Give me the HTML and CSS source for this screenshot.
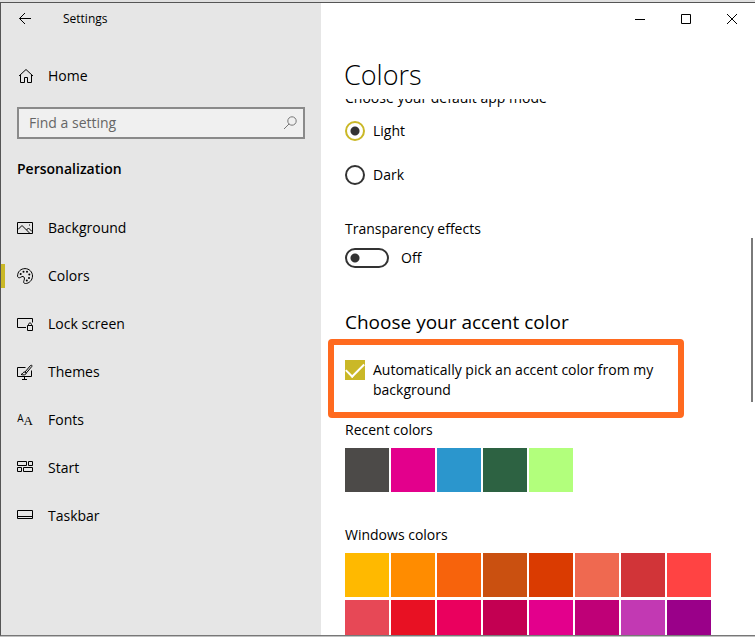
FILE: index.html
```html
<!DOCTYPE html>
<html lang="en">
<head>
	<meta charset="UTF-8">
	<meta name="viewport" content="width=device-width, initial-scale=1.0">
	<title>Settings</title>
	<link rel="stylesheet" href="styles.css">
</head>
<body>
	<div class="window">
		<aside class="sidebar">
			<div class="titlebar">
				<button class="back" aria-label="Back">
					<svg width="16" height="16" viewBox="0 0 16 16"><path d="M14 7.500H2.500M8 2L2.500 7.500L8 13"/></svg>
				</button>
				<span class="app-name">Settings</span>
			</div>

			<a class="item home" href="#">
				<svg width="16" height="16" viewBox="0 0 16 16"><path d="M2 8L9 1.500L16 8M3.500 7V14.500H7.500V9.500H10.500V14.500H14.500V7"/></svg>
				Home
			</a>

			<div class="search">
				<input type="text" placeholder="Find a setting" aria-label="Find a setting">
				<svg width="14" height="14" viewBox="0 0 14 14"><circle cx="9" cy="5" r="4.200"/><path d="M6 8L1 13"/></svg>
			</div>

			<h3>Personalization</h3>

			<nav>
				<a class="item" href="#">
					<svg width="16" height="16" viewBox="0 0 16 16"><path d="M.5 2.500H15.500V13.500H.5ZM1 9.500L5 5.500L12.500 13M9.500 10L11.500 8L15 11.500M12 5H13"/></svg>
					Background
				</a>
				<a class="item active" href="#">
					<svg width="16" height="16" viewBox="0 0 16 16"><path d="M.6 8.500C.3 3.500 4 .6 8 .6C12.300 .6 15.500 4 15.500 8C15.500 12.300 12 15.500 8.500 15.500C6.500 15.500 6.300 14 7 12.500C7.900 10.500 7.500 8.800 6 8.500C4.500 8.200 3.700 9.700 2.500 9.700C1.500 9.700 .7 9.300 .6 8.500Z"/><g class="dots"><circle cx="3.700" cy="6" r="1"/><circle cx="6.500" cy="3.800" r="1"/><circle cx="10" cy="3.800" r="1"/><circle cx="12.300" cy="6.500" r="1"/><circle cx="12" cy="10" r="1"/><circle cx="9.800" cy="12.500" r="1"/></g></svg>
					Colors
				</a>
				<a class="item" href="#">
					<svg width="16" height="16" viewBox="0 0 16 16"><path d="M9 11.500H.5V2.500H15.500V6.500M10.500 9.500H15.500V14.500H10.500ZM11.500 9.500V8.500C11.500 6.500 14.500 6.500 14.500 8.500V9.500"/></svg>
					Lock screen
				</a>
				<a class="item" href="#">
					<svg width="16" height="16" viewBox="0 0 16 16"><path d="M8.500 3.500H.5V12.500H14.500V6.500M7.500 12.500V15M5 15.500H10M8 8L13.500 1.500C14.500 .8 15.500 1.500 14.800 2.500L9.300 9M8 8C6 7.600 6 10 4 10.500C6.500 11.300 9 11 9.300 9Z"/></svg>
					Themes
				</a>
				<a class="item" href="#">
					<span class="letters" aria-hidden="true"><span class="sans">A</span><span class="serif">A</span></span>
					Fonts
				</a>
				<a class="item" href="#">
					<svg width="16" height="16" viewBox="0 0 16 16"><path d="M.5 1.500H9.500V5.500H.5ZM11.500 1.500H15.500V5.500H11.500ZM.5 7.500H4.500V11.500H.5ZM6.500 7.500H15.500V11.500H6.500Z"/></svg>
					Start
				</a>
				<a class="item" href="#">
					<svg width="16" height="16" viewBox="0 0 16 16"><path d="M.5 2.500H15.500V10.500H.5ZM.5 8.500H15.500"/></svg>
					Taskbar
				</a>
			</nav>
		</aside>

		<main class="page">
			<div class="caption">
				<button aria-label="Minimize"><svg width="12" height="12" viewBox="0 0 12 12"><path d="M1 6.500H11"/></svg></button>
				<button aria-label="Maximize"><svg width="12" height="12" viewBox="0 0 12 12"><path d="M1.500 1.500H10.500V10.500H1.500Z"/></svg></button>
				<button aria-label="Close"><svg width="12" height="12" viewBox="0 0 12 12"><path d="M1 1L11 11M11 1L1 11"/></svg></button>
			</div>
			<h1>Colors</h1>

			<div class="scroller">
				<div class="content">
					<p>Choose your default app mode</p>
					<div class="modes">
						<label class="option"><input type="radio" name="mode" checked> Light</label>
						<label class="option"><input type="radio" name="mode"> Dark</label>
					</div>

					<label class="effects" for="transparency">Transparency effects</label>
					<div class="switch">
						<input type="checkbox" id="transparency" role="switch">
						<span>Off</span>
					</div>

					<h2>Choose your accent color</h2>
					<div class="highlight">
						<label class="option">
							<input type="checkbox" checked>
							<span>Automatically pick an accent color from my background</span>
						</label>
					</div>

					<p>Recent colors</p>
					<div class="swatches" id="recent"></div>

					<p class="windows-colors">Windows colors</p>
					<div class="swatches" id="windows"></div>
				</div>
			</div>
			<div class="thumb"></div>
		</main>
	</div>

	<script src="script.js"></script>
</body>
</html>
```

FILE: styles.css
```css
:root {
	--accent: #cab827;
	--dark: #333;
}
* {
	box-sizing: border-box;
}
body {
	margin: 0;
	height: 100vh;
	padding: 2px 0 1px;
	background: linear-gradient(#e0e0e0, #c0c0c0);
	color: #000;
	font: 14px/20px "Open Sans", "Noto Sans", sans-serif;
	overflow: hidden;
}
.window {
	display: flex;
	height: 100%;
	border: 1px solid #555;
	border-right: 0;
	border-bottom-color: #777;
}
h1, h2, h3, p {
	margin: 0;
	font-weight: normal;
}
button {
	border: 0;
	padding: 0;
	background: none;
}
svg {
	display: block;
	flex: none;
	fill: none;
	stroke: #000;
}

/* left side */
.sidebar {
	flex: none;
	width: 320px;
	background-color: #e6e6e6;
}
.titlebar {
	display: flex;
	align-items: center;
	gap: 30px;
	height: 32px;
	padding-left: 16px;
}
.app-name {
	font-size: 12px;
}
.item {
	display: flex;
	align-items: center;
	gap: 15px;
	height: 48px;
	padding-left: 16px;
	color: #000;
	text-decoration: none;
}
.home {
	margin-top: 17px;
}
.active {
	background: linear-gradient(var(--accent), var(--accent)) left center / 4px 24px no-repeat;
}
.search {
	display: flex;
	align-items: center;
	height: 32px;
	margin: 7px 16px 20px;
	padding: 0 6px 0 10px;
	border: 2px solid #8a8a8a;
	background-color: #f0f0f0;
}
.search input {
	flex: 1;
	min-width: 0;
	padding: 0;
	border: 0;
	outline: 0;
	background: none;
	font: inherit;
}
.search input::placeholder {
	color: #666;
	opacity: 1;
}
.search svg {
	stroke: #777;
}
h3 {
	margin: 0 16px 25px;
	font-size: 14px;
	font-weight: 600;
}
.dots {
	fill: #000;
	stroke: none;
}
/* small A, then a bigger one a bit lower */
.letters {
	display: flex;
	align-items: flex-end;
	justify-content: center;
	width: 16px;
	height: 16px;
}
.sans {
	padding-bottom: 4px;
	font-size: 10px;
	line-height: 12px;
}
.serif {
	font: 13px/14px "Liberation Serif", serif;
}

/* right side */
.page {
	position: relative;
	display: flex;
	flex: 1;
	flex-direction: column;
	min-width: 0;
	background-color: #fff;
}
.caption {
	display: flex;
	justify-content: flex-end;
	height: 32px;
}
.caption button {
	display: flex;
	align-items: center;
	justify-content: center;
	width: 46px;
}
h1 {
	padding: 22px 23px 6px;
	font-size: 27px;
	font-weight: 300;
	line-height: 36px;
}
.scroller {
	flex: 1;
	min-height: 0;
	overflow: hidden;
}
/* scrolled a little, first line is cut by the header */
.content {
	margin-top: -11px;
	padding: 0 24px;
}
.modes {
	display: flex;
	flex-direction: column;
	gap: 24px;
	margin: 13px 0 34px;
}
.option {
	display: flex;
	gap: 8px;
}
.option input, .switch input {
	appearance: none;
	flex: none;
	width: 20px;
	height: 20px;
	margin: 0;
	border: 2px solid var(--dark);
	border-radius: 10px;
}
.option input[type=radio]:checked {
	border-color: var(--accent);
	background: radial-gradient(circle, var(--dark) 4px, transparent 5px);
}
.option input[type=checkbox] {
	display: grid;
	place-items: center;
	border: 0;
	border-radius: 0;
	background-color: var(--accent);
}
.option input[type=checkbox]:checked::before {
	content: "";
	width: 16px;
	height: 8px;
	margin-bottom: 5px;
	border: solid #fff;
	border-width: 0 0 2px 2px;
	transform: rotate(-45deg);
}
.effects {
	display: block;
	margin-bottom: 9px;
}
.switch {
	display: flex;
	gap: 12px;
}
.switch input {
	width: 44px;
	background: radial-gradient(circle at 8px 8px, var(--dark) 4px, transparent 5px);
}
h2 {
	margin: 40px 0 3px;
	font-size: 19px;
	line-height: 28px;
}
.highlight {
	max-width: 356px;
	margin: 0 0 2px -17px;
	padding: 15px 11px 12px;
	border: 6px solid #ff6a1f;
	border-radius: 4px;
}
.swatches {
	display: grid;
	grid-template-columns: repeat(8, 44px);
	gap: 3px 2px;
	margin-top: 8px;
}
.swatches button {
	height: 44px;
}
.windows-colors {
	margin-top: 33px;
}
/* scroll bar */
.thumb {
	position: absolute;
	top: 235px;
	right: 2px;
	width: 2px;
	height: 164px;
	background-color: #7a7a7a;
}
```

FILE: script.js
```js
var recent = ["#4c4a48", "#e3008c", "#2b96cd", "#2d6242", "#b2ff7c"];
var windowsColors = [
	"#ffb900", "#ff8c00", "#f7630c", "#ca5010", "#da3b01", "#ef6950", "#d13438", "#ff4343",
	"#e74856", "#e81123", "#ea005e", "#c30052", "#e3008c", "#bf0077", "#c239b3", "#9a0089"
];

function fill(id, colors) {
	var parent = document.getElementById(id);
	colors.forEach(function (c) {
		var b = document.createElement("button");
		b.style.backgroundColor = c;
		b.setAttribute("aria-label", c);
		parent.appendChild(b);
	});
}

fill("recent", recent);
fill("windows", windowsColors);
```
